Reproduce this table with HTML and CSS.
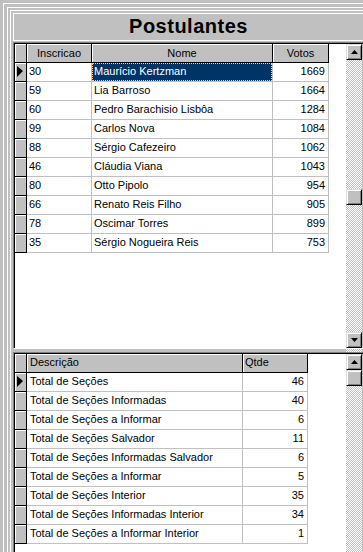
FILE: index.html
```html
<!DOCTYPE html>
<html>
<head>
<meta charset="utf-8">
<link rel="stylesheet" href="styles.css">
</head>
<body>
<div class="f1"><div class="f2"><div class="f3">
  <div class="title">Postulantes</div>

  <div class="grid g1">
    <div class="grid-in">
      <div class="body">
        <div class="row head">
          <div class="h"></div><div class="h ctr">Inscricao</div><div class="h ctr">Nome</div><div class="h ctr">Votos</div><div class="rest"></div>
        </div>
        <div class="row"><div class="ind"><span class="arrow"></span></div><div class="c">30</div><div class="c sel"><span class="focus">Maurício Kertzman</span></div><div class="c num">1669</div><div class="rest"></div></div>
        <div class="row"><div class="ind"></div><div class="c">59</div><div class="c">Lia Barroso</div><div class="c num">1664</div><div class="rest"></div></div>
        <div class="row"><div class="ind"></div><div class="c">60</div><div class="c">Pedro Barachisio Lisbôa</div><div class="c num">1284</div><div class="rest"></div></div>
        <div class="row"><div class="ind"></div><div class="c">99</div><div class="c">Carlos Nova</div><div class="c num">1084</div><div class="rest"></div></div>
        <div class="row"><div class="ind"></div><div class="c">88</div><div class="c">Sérgio Cafezeiro</div><div class="c num">1062</div><div class="rest"></div></div>
        <div class="row"><div class="ind"></div><div class="c">46</div><div class="c">Cláudia Viana</div><div class="c num">1043</div><div class="rest"></div></div>
        <div class="row"><div class="ind"></div><div class="c">80</div><div class="c">Otto Pipolo</div><div class="c num">954</div><div class="rest"></div></div>
        <div class="row"><div class="ind"></div><div class="c">66</div><div class="c">Renato Reis Filho</div><div class="c num">905</div><div class="rest"></div></div>
        <div class="row"><div class="ind"></div><div class="c">78</div><div class="c">Oscimar Torres</div><div class="c num">899</div><div class="rest"></div></div>
        <div class="row"><div class="ind"></div><div class="c">35</div><div class="c">Sérgio Nogueira Reis</div><div class="c num">753</div><div class="rest"></div></div>
      </div>
      <div class="sb">
        <div class="btn"><svg width="7" height="4" viewBox="0 0 7 4"><polygon points="3.5,0 7,4 0,4"/></svg></div>
        <div class="track"><div class="thumb t1"></div></div>
        <div class="btn"><svg width="7" height="4" viewBox="0 0 7 4"><polygon points="0,0 7,0 3.5,4"/></svg></div>
      </div>
    </div>
  </div>

  <div class="gap"><div class="gap-fill"></div><div class="gap-track"></div></div>

  <div class="grid g2">
    <div class="grid-in">
      <div class="body">
        <div class="row head">
          <div class="h"></div><div class="h">Descrição</div><div class="h hq">Qtde</div><div class="rest"></div>
        </div>
        <div class="row"><div class="ind"><span class="arrow"></span></div><div class="c">Total de Seções</div><div class="c num">46</div><div class="rest"></div></div>
        <div class="row"><div class="ind"></div><div class="c">Total de Seções Informadas</div><div class="c num">40</div><div class="rest"></div></div>
        <div class="row"><div class="ind"></div><div class="c">Total de Seções a Informar</div><div class="c num">6</div><div class="rest"></div></div>
        <div class="row"><div class="ind"></div><div class="c">Total de Seções Salvador</div><div class="c num">11</div><div class="rest"></div></div>
        <div class="row"><div class="ind"></div><div class="c">Total de Seções Informadas Salvador</div><div class="c num">6</div><div class="rest"></div></div>
        <div class="row"><div class="ind"></div><div class="c">Total de Seções a Informar</div><div class="c num">5</div><div class="rest"></div></div>
        <div class="row"><div class="ind"></div><div class="c">Total de Seções Interior</div><div class="c num">35</div><div class="rest"></div></div>
        <div class="row"><div class="ind"></div><div class="c">Total de Seções Informadas Interior</div><div class="c num">34</div><div class="rest"></div></div>
        <div class="row"><div class="ind"></div><div class="c">Total de Seções a Informar Interior</div><div class="c num">1</div><div class="rest"></div></div>
        <div class="fill"></div>
      </div>
      <div class="sb">
        <div class="btn"><svg width="7" height="4" viewBox="0 0 7 4"><polygon points="3.5,0 7,4 0,4"/></svg></div>
        <div class="track"><div class="thumb"></div></div>
      </div>
    </div>
  </div>
</div></div></div>
</body>
</html>
```
FILE: styles.css
```css
* { box-sizing: border-box; }
html, body { margin: 0; padding: 0; }
body {
  width: 363px;
  height: 552px;
  overflow: hidden;
  background: #c0c0c0;
  font-family: "Liberation Sans", Arial, sans-serif;
  font-size: 11px;
  color: #000;
}
.f1 { margin: 3px 0 0 3px; border-top: 1px solid #fff; border-left: 1px solid #fff; padding: 3px 0 0 3px; }
.f2 { border-top: 1px solid #fff; border-left: 1px solid #fff; padding: 2px 0 0 2px; }
.f3 { border-top: 1px solid #fff; border-left: 1px solid #fff; padding: 2px 0 0 2px; height: 560px; }

.title {
  height: 28px;
  border-top: 1px solid #fff;
  border-left: 1px solid #fff;
  border-bottom: 1px solid #fff;
  text-align: center;
  font-weight: bold;
  font-size: 20px;
  letter-spacing: 0.5px;
  line-height: 25px;
}

.grid { margin-top: 1px; border-top: 1px solid #808080; border-left: 1px solid #808080; }
.grid-in { border-top: 1px solid #000; border-left: 1px solid #000; display: flex; }
.g1 { border-bottom: 1px solid #fff; }
.g1 .grid-in { height: 305px; }
.g2 { margin-top: 0; }
.g2 .grid-in { height: 210px; }

.body { width: 331px; background: #fff; display: flex; flex-direction: column; }
.row { display: grid; height: 19px; flex: none; }
.g1 .row { grid-template-columns: 12px 65px 181px 56px 1fr; }
.g2 .row { grid-template-columns: 12px 216px 65px 1fr; }

.h {
  background: #c0c0c0;
  border-right: 1px solid #000;
  border-bottom: 1px solid #000;
  box-shadow: inset 1px 1px #fff;
  padding: 0 3px;
  line-height: 17px;
  white-space: nowrap;
  overflow: hidden;
}
.g1 .h { line-height: 18px; }
.h.hq { padding-left: 2px; }
.ctr { text-align: center; }
.rest { background: #fff; }

.ind {
  background: #c0c0c0;
  border-right: 1px solid #000;
  border-bottom: 1px solid #000;
  box-shadow: inset 1px 1px #fff;
}
.arrow {
  display: block;
  width: 0;
  height: 0;
  margin: 3px 0 0 2px;
  border-left: 6px solid #000;
  border-top: 5px solid transparent;
  border-bottom: 6px solid transparent;
}

.c {
  background: #fff;
  border-right: 1px solid #c0c0c0;
  border-bottom: 1px solid #c0c0c0;
  padding: 0 2px;
  line-height: 16px;
  white-space: nowrap;
  overflow: hidden;
}
.g2 .c { padding-left: 3px; }
.c.num { text-align: right; padding-right: 3px; }
.c.sel { background: #003366; color: #fff; padding: 0; }
.focus {
  display: block;
  height: 18px;
  border: 1px dotted #ffcc99;
  padding-left: 1px;
  line-height: 14px;
}
.fill { flex: 1; background: #fff; }

.sb { width: 16px; display: flex; flex-direction: column; }
.btn {
  width: 16px;
  height: 16px;
  flex: none;
  background: #c0c0c0;
  border-top: 1px solid #dfdfdf;
  border-left: 1px solid #dfdfdf;
  border-right: 1px solid #000;
  border-bottom: 1px solid #000;
  box-shadow: inset 1px 1px #fff, inset -1px -1px #808080;
  display: flex;
  align-items: center;
  justify-content: center;
}
.btn svg { display: block; fill: #000; }
.track, .gap-track {
  background-color: #fff;
  background-image: conic-gradient(#c0c0c0 25%, #fff 0 50%, #c0c0c0 0 75%, #fff 0);
  background-size: 2px 2px;
}
.track { flex: 1; }
.thumb {
  width: 16px;
  height: 16px;
  background: #c0c0c0;
  border-top: 1px solid #dfdfdf;
  border-left: 1px solid #dfdfdf;
  border-right: 1px solid #000;
  border-bottom: 1px solid #000;
  box-shadow: inset 1px 1px #fff, inset -1px -1px #808080;
}
.thumb.t1 { margin-top: 129px; }

.gap { display: flex; height: 3px; }
.gap-fill { width: 333px; }
.gap-track { width: 16px; }
```
